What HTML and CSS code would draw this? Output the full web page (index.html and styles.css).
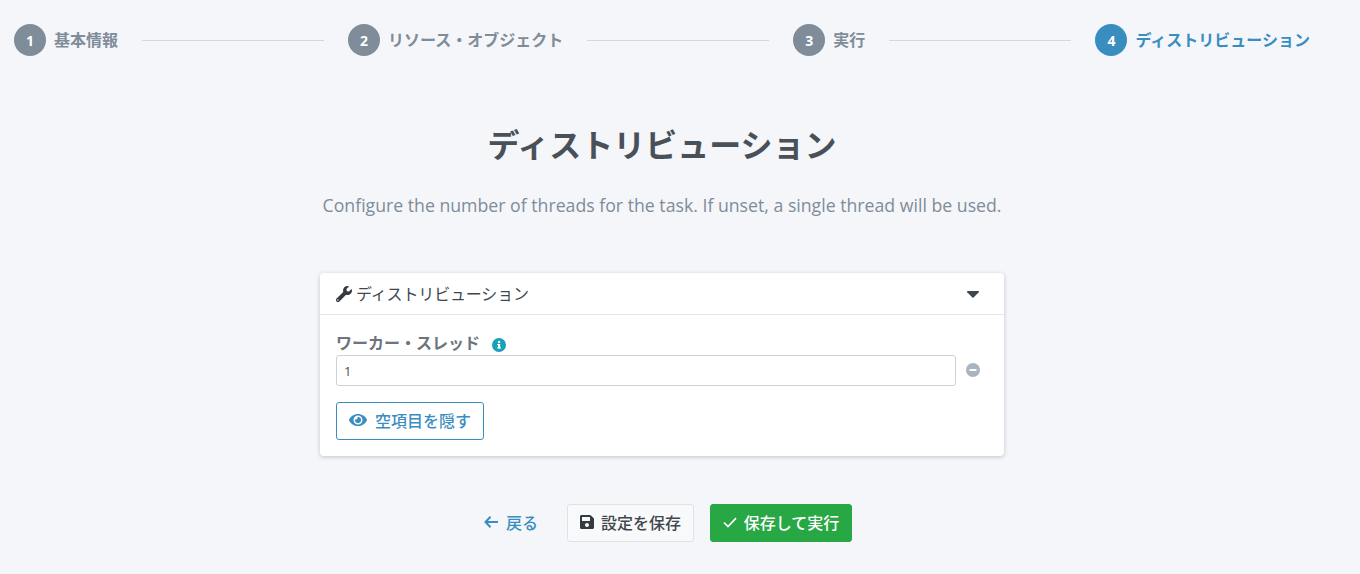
FILE: index.html
```html
<!DOCTYPE html>
<html lang="ja">
<head>
    <meta charset="UTF-8">
    <title>ディストリビューション</title>
    <link rel="stylesheet" href="styles.css">
</head>
<body>
    <div class="page">
        <div class="stepper">
            <div class="step"><span class="step-num">1</span><span class="step-label">基本情報</span></div>
            <div class="step-line"></div>
            <div class="step"><span class="step-num">2</span><span class="step-label">リソース・オブジェクト</span></div>
            <div class="step-line"></div>
            <div class="step"><span class="step-num">3</span><span class="step-label">実行</span></div>
            <div class="step-line"></div>
            <div class="step active"><span class="step-num">4</span><span class="step-label">ディストリビューション</span></div>
        </div>

        <h1 class="title">ディストリビューション</h1>
        <p class="subtitle">Configure the number of threads for the task. If unset, a single thread will be used.</p>

        <div class="card">
            <div class="card-header">
                <svg class="wrench" viewBox="0 0 512 512"><path d="M507.7 109.1c-2.2-9-13.5-12.1-20.1-5.5l-74.4 74.4-67.9-11.3-11.3-67.9 74.4-74.4c6.600-6.600 3.400-17.900-5.700-20.200-47.400-11.700-99.300.9-136.300 37.900-39.600 39.600-50.500 97.100-34.100 147.200L18.700 402.800c-25 25-25 65.500 0 90.500s65.500 25 90.500 0l213.200-213.200c50.100 16.700 107.500 5.700 147.400-34.200 37.100-37.100 49.700-89.300 37.900-136.800zM64 472c-13.200 0-24-10.800-24-24 0-13.300 10.800-24 24-24s24 10.700 24 24c0 13.200-10.700 24-24 24z"/></svg>
                <span class="card-title">ディストリビューション</span>
                <svg class="caret" viewBox="0 0 12 7"><path d="M0.8 0h10.400c.7 0 1 .8.600 1.300L6.600 6.600c-.3.300-.9.300-1.200 0L.2 1.300C-.2.800.1 0 .8 0z"/></svg>
            </div>
            <div class="card-body">
                <div class="field-label">
                    <span>ワーカー・スレッド</span>
                    <svg class="info" viewBox="0 0 14 14"><circle cx="7" cy="7" r="7" fill="#17a2b8"/><rect x="6" y="6" width="2.200" height="4.300" fill="#fff"/><rect x="5.200" y="9.400" width="3.800" height="1.100" fill="#fff"/><rect x="5.200" y="6" width="2" height="1" fill="#fff"/><circle cx="7" cy="4" r="1.200" fill="#fff"/></svg>
                </div>
                <div class="field-row">
                    <input class="text-input" type="text" value="1">
                    <svg class="remove" viewBox="0 0 14 14"><circle cx="7" cy="7" r="7" fill="#aab4bf"/><rect x="3.500" y="6" width="7" height="2" rx=".6" fill="#fff"/></svg>
                </div>
                <button class="btn btn-outline">
                    <svg class="eye" viewBox="0 0 576 512"><path d="M572.500 241.400C518.300 135.600 410.900 64 288 64S57.700 135.600 3.500 241.400a32.400 32.400 0 0 0 0 29.200C57.700 376.400 165.100 448 288 448s230.300-71.600 284.500-177.400a32.400 32.400 0 0 0 0-29.200zM288 400a144 144 0 1 1 144-144 143.900 143.900 0 0 1-144 144zm0-240a95.300 95.300 0 0 0-25.300 3.800 47.900 47.900 0 0 1-66.900 66.900A95.800 95.800 0 1 0 288 160z"/></svg>
                    空項目を隠す
                </button>
            </div>
        </div>

        <div class="actions">
            <a class="back-link" href="#">
                <svg class="arrow" viewBox="0 0 14 12"><path d="M6.500 .8L1.500 6l5 5.200M1.500 6H14" fill="none" stroke="currentColor" stroke-width="2"/></svg>
                戻る
            </a>
            <button class="btn btn-light">
                <svg class="disk" viewBox="0 0 448 512"><path d="M433.900 129.900l-83.900-83.900A48 48 0 0 0 316.100 32H48C21.500 32 0 53.500 0 80v352c0 26.500 21.500 48 48 48h352c26.500 0 48-21.500 48-48V163.900a48 48 0 0 0-14.100-34zM224 416c-35.300 0-64-28.700-64-64 0-35.300 28.700-64 64-64s64 28.700 64 64c0 35.300-28.700 64-64 64zm96-304.500V212c0 6.600-5.400 12-12 12H76c-6.600 0-12-5.400-12-12V108c0-6.600 5.400-12 12-12h228.500c3.200 0 6.200 1.300 8.500 3.500l3.500 3.500c2.200 2.200 3.500 5.300 3.500 8.500z"/></svg>
                設定を保存
            </button>
            <button class="btn btn-success">
                <svg class="check" viewBox="0 0 14 11"><path d="M1 5.500L5 9.500 13 1.200" fill="none" stroke="currentColor" stroke-width="1.700"/></svg>
                保存して実行
            </button>
        </div>
    </div>
</body>
</html>
```

FILE: styles.css
```css
* {
    margin: 0;
    padding: 0;
    box-sizing: border-box;
}
html, body {
    height: 100%;
    background-color: #f4f6fa;
    font-family: "Open Sans", "Noto Sans CJK JP", sans-serif;
    color: #495057;
    overflow: hidden;
}
.page {
    width: 1324px;
    padding: 24px 14px 0;
}
.stepper {
    display: flex;
    align-items: center;
    gap: 24px;
}
.step {
    display: flex;
    align-items: center;
    gap: 8px;
    color: #7f8c99;
}
.step-num {
    width: 32px;
    height: 32px;
    border-radius: 50%;
    background-color: #7f8c99;
    color: #fff;
    font-size: 14px;
    font-weight: 700;
    display: flex;
    align-items: center;
    justify-content: center;
}
.step-label {
    font-size: 16px;
    font-weight: 700;
    line-height: 32px;
    white-space: nowrap;
}
.step.active {
    color: #3a8ebf;
}
.step.active .step-num {
    background-color: #3a8ebf;
}
.step-line {
    flex: 1;
    height: 1px;
    background-color: #d4d8de;
}
.title {
    font-size: 32px;
    font-weight: 700;
    line-height: 44px;
    text-align: center;
    margin-top: 67px;
}
.subtitle {
    font-size: 17.7px;
    line-height: 26px;
    color: #7f8c99;
    text-align: center;
    margin-top: 25px;
}
.card {
    width: 684px;
    margin: 55px auto 0;
    background-color: #fff;
    border-radius: 4px;
    box-shadow: 0 1px 4px rgba(60, 70, 85, 0.28);
}
.card-header {
    height: 42px;
    padding: 0 16px 2px;
    display: flex;
    align-items: center;
    border-bottom: 1px solid #e4e6ea;
    font-size: 16px;
}
.wrench {
    width: 16px;
    height: 16px;
    fill: #343a40;
    margin: 2px 4px 0 0;
}
.card-title {
    flex: 1;
    color: #3f474e;
    letter-spacing: -0.15px;
}
.caret {
    width: 12px;
    height: 7px;
    fill: #3f474e;
    margin: 3px 9px 0 0;
}
.card-body {
    padding: 16px;
}
.field-label {
    display: flex;
    align-items: center;
    gap: 12px;
    font-size: 16px;
    font-weight: 700;
    line-height: 24px;
    color: #6c757d;
}
.info {
    width: 14px;
    height: 14px;
    margin-top: 3px;
}
.field-row {
    display: flex;
    align-items: center;
    gap: 10px;
}
.text-input {
    width: 620px;
    height: 31px;
    padding: 0 7px;
    border: 1px solid #ced1d6;
    border-radius: 3px;
    font-family: inherit;
    font-size: 13px;
    color: #495057;
    background-color: #fff;
}
.remove {
    width: 14px;
    height: 14px;
    margin-bottom: 2px;
}
.btn {
    height: 38px;
    padding-bottom: 2px;
    border-radius: 3px;
    font-family: inherit;
    font-size: 16px;
    font-weight: 500;
    display: inline-flex;
    align-items: center;
    justify-content: center;
    gap: 7px;
    cursor: pointer;
}
.btn-outline {
    width: 148px;
    margin-top: 16px;
    background-color: #fff;
    border: 1px solid #3a8ebf;
    color: #3a8ebf;
    gap: 8px;
}
.eye {
    width: 18px;
    height: 16px;
    fill: currentColor;
}
.actions {
    display: flex;
    justify-content: center;
    align-items: center;
    padding-left: 12px;
    margin-top: 48px;
}
.back-link {
    display: flex;
    align-items: center;
    gap: 8px;
    padding-bottom: 2px;
    font-size: 16px;
    font-weight: 500;
    color: #3a8ebf;
    text-decoration: none;
    margin-right: 29px;
}
.arrow {
    width: 14px;
    height: 12px;
}
.btn-light {
    width: 127px;
    background-color: #f8f9fa;
    border: 1px solid #dfe2e6;
    color: #3f474e;
    margin-right: 16px;
}
.disk {
    width: 14px;
    height: 16px;
    fill: #343a40;
}
.btn-success {
    width: 142px;
    background-color: #28a745;
    border: 1px solid #28a745;
    color: #fff;
}
.check {
    width: 14px;
    height: 11px;
}
```
